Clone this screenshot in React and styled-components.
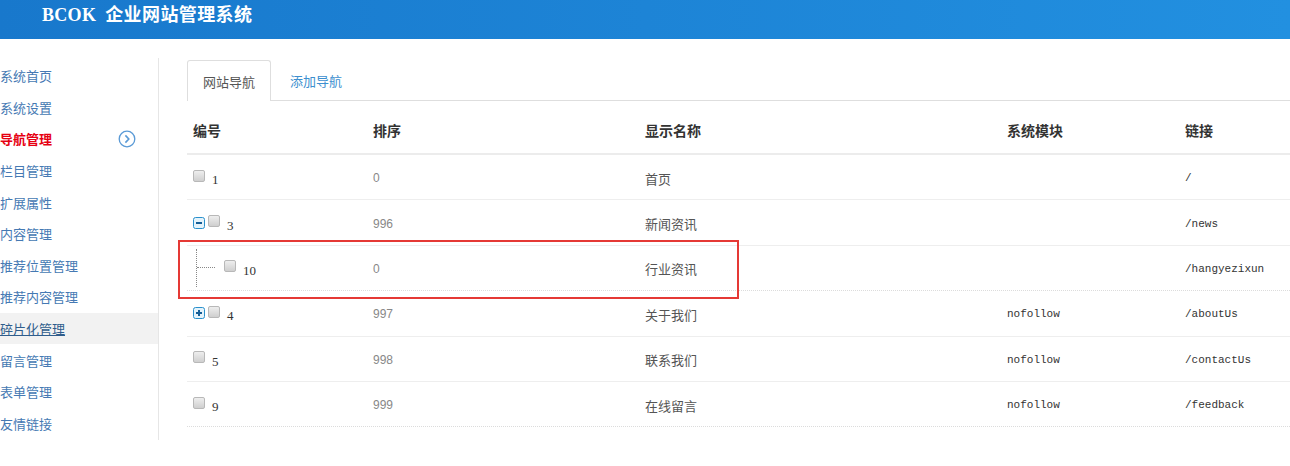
import styled, { createGlobalStyle } from "styled-components";

const GlobalStyle = createGlobalStyle`
  html, body {
    margin: 0;
    padding: 0;
    background: #fff;
    font-family: "Liberation Sans", "Noto Sans CJK SC", sans-serif;
  }
`;

const menu = [
  { label: "系统首页" },
  { label: "系统设置" },
  { label: "导航管理", active: true },
  { label: "栏目管理" },
  { label: "扩展属性" },
  { label: "内容管理" },
  { label: "推荐位置管理" },
  { label: "推荐内容管理" },
  { label: "碎片化管理", hover: true },
  { label: "留言管理" },
  { label: "表单管理" },
  { label: "友情链接" },
];

const rows = [
  { id: "1", sort: "0", name: "首页", module: "", link: "/" },
  { id: "3", sort: "996", name: "新闻资讯", module: "", link: "/news", toggle: "minus" },
  { id: "10", sort: "0", name: "行业资讯", module: "", link: "/hangyezixun", child: true, marked: true },
  { id: "4", sort: "997", name: "关于我们", module: "nofollow", link: "/aboutUs", toggle: "plus" },
  { id: "5", sort: "998", name: "联系我们", module: "nofollow", link: "/contactUs" },
  { id: "9", sort: "999", name: "在线留言", module: "nofollow", link: "/feedback", last: true },
];

function CircleArrow() {
  return (
    <svg width="18" height="18" viewBox="0 0 18 18">
      <circle cx="9" cy="9" r="7.8" fill="none" stroke="#5a9ad6" strokeWidth="1.3" />
      <path d="M7.4 5.4 L10.8 9 L7.4 12.6" fill="none" stroke="#5a9ad6" strokeWidth="1.6" />
    </svg>
  );
}

function ToggleIcon({ type }) {
  return (
    <svg width="12" height="12" viewBox="0 0 12 12">
      <rect x="0.5" y="0.5" width="11" height="11" rx="2" fill="#e4f3fb" stroke="#2a90cc" />
      <rect x="3" y="5" width="6" height="2" fill="#155e96" />
      {type === "plus" && <rect x="5" y="3" width="2" height="6" fill="#155e96" />}
    </svg>
  );
}

export default function App() {
  return (
    <>
      <GlobalStyle />
      <Header>
        <Brand>
          BCOK<BrandCn>企业网站管理系统</BrandCn>
        </Brand>
      </Header>
      <Body>
        <Sidebar>
          {menu.map((m) => (
            <MenuItem key={m.label} $active={m.active} $hover={m.hover}>
              <span>{m.label}</span>
              {m.active && <CircleArrow />}
            </MenuItem>
          ))}
        </Sidebar>
        <Main>
          <Tabs>
            <Tab $active>网站导航</Tab>
            <Tab>添加导航</Tab>
          </Tabs>
          <Table>
            <HeadRow>
              <HeadCell>编号</HeadCell>
              <HeadCell>排序</HeadCell>
              <HeadCell>显示名称</HeadCell>
              <HeadCell>系统模块</HeadCell>
              <HeadCell>链接</HeadCell>
            </HeadRow>
            {rows.map((r) => (
              <Row key={r.id} $dotted={r.child || r.last}>
                <IdCell>
                  {r.child && (
                    <Tree>
                      <TreeH />
                    </Tree>
                  )}
                  {r.toggle && <ToggleIcon type={r.toggle} />}
                  <Check />
                  <IdText>{r.id}</IdText>
                </IdCell>
                <SortCell>{r.sort}</SortCell>
                <NameCell>{r.name}</NameCell>
                <MonoCell>{r.module}</MonoCell>
                <MonoCell>{r.link}</MonoCell>
                {r.marked && <Mark />}
              </Row>
            ))}
          </Table>
        </Main>
      </Body>
    </>
  );
}

const Header = styled.div`
  height: 39px;
  background: linear-gradient(to right, #1878cc, #2290e0);
  padding: 4px 0 0 42px;
  box-sizing: border-box;
`;

const Brand = styled.div`
  color: #fff;
  font-family: "Liberation Serif", "Noto Sans CJK SC", serif;
  font-weight: bold;
  font-size: 18px;
  line-height: 22px;
  letter-spacing: 0.3px;
`;

const BrandCn = styled.span`
  margin-left: 9px;
  letter-spacing: 0.4px;
`;

const Body = styled.div`
  display: flex;
  align-items: flex-start;
  padding-top: 19px;
`;

const Sidebar = styled.div`
  width: 158px;
  flex-shrink: 0;
  border-right: 1px solid #e6e6e6;
  padding: 2px 0 1px;
`;

const MenuItem = styled.div`
  height: 31.6px;
  display: flex;
  align-items: center;
  justify-content: space-between;
  padding-right: 22px;
  font-size: 13px;
  color: ${({ $active, $hover }) => ($active ? "#e60012" : $hover ? "#2f5d8c" : "#4579b3")};
  font-weight: ${({ $active }) => ($active ? "bold" : "normal")};
  text-decoration: ${({ $hover }) => ($hover ? "underline" : "none")};
  background: ${({ $hover }) => ($hover ? "#f2f2f2" : "transparent")};
`;

const Main = styled.div`
  flex: 1;
  padding-left: 28px;
  padding-top: 2px;
  min-width: 0;
`;

const Tabs = styled.div`
  display: flex;
  gap: 3px;
  border-bottom: 1px solid #dedede;
  height: 40px;
`;

const Tab = styled.div`
  box-sizing: border-box;
  padding: 0 15px;
  display: flex;
  align-items: center;
  font-size: 13px;
  color: ${({ $active }) => ($active ? "#555" : "#3d8fcf")};
  border: 1px solid ${({ $active }) => ($active ? "#dedede" : "transparent")};
  border-bottom: none;
  border-radius: 3px 3px 0 0;
  background: #fff;
  margin-bottom: ${({ $active }) => ($active ? "-1px" : "0")};
  height: ${({ $active }) => ($active ? "41px" : "40px")};
`;

const Table = styled.div`
  display: flex;
  flex-direction: column;
`;

const grid = `
  display: grid;
  grid-template-columns: 180px 272px 362px 178px 1fr;
`;

const HeadRow = styled.div`
  ${grid}
  border-bottom: 2px solid #ececec;
  padding: 20px 0 12px;
`;

const HeadCell = styled.div`
  padding: 0 6px;
  font-size: 14px;
  line-height: 20px;
  font-weight: bold;
  color: #333;
`;

const Row = styled.div`
  ${grid}
  position: relative;
  height: 44.4px;
  align-items: center;
  border-bottom: 1px ${({ $dotted }) => ($dotted ? "dotted #dcdcdc" : "solid #eeeeee")};
`;

const Cell = styled.div`
  padding: 0 6px;
  font-size: 12px;
  color: #666;
  white-space: nowrap;
  padding-top: 2px;
`;

const IdCell = styled(Cell)`
  display: flex;
  align-items: center;
  gap: 3px;
  padding-top: 0;
`;

const Tree = styled.span`
  width: 24px;
  height: 38px;
  border-left: 1px dotted #888;
  margin-left: 3px;
  margin-right: 1px;
  display: flex;
  align-items: center;
  box-sizing: border-box;
`;

const TreeH = styled.span`
  width: 18px;
  border-top: 1px dotted #888;
`;

const Check = styled.span`
  width: 12px;
  height: 12px;
  box-sizing: border-box;
  border: 1px solid #b8b8b8;
  border-radius: 2px;
  background: linear-gradient(#eeeeee, #cfcfcf);
  margin-top: -3px;
`;

const IdText = styled.span`
  font-family: "Liberation Serif", serif;
  font-size: 13px;
  color: #333;
  margin-left: 4px;
  margin-top: 6px;
`;

const SortCell = styled(Cell)`
  color: #888;
  font-size: 12px;
`;

const NameCell = styled(Cell)`
  font-size: 13px;
  color: #555;
`;

const MonoCell = styled(Cell)`
  font-family: "Liberation Mono", monospace;
  font-size: 11px;
  color: #333;
`;

const Mark = styled.div`
  position: absolute;
  left: -9px;
  top: -6px;
  width: 561px;
  height: 59px;
  box-sizing: border-box;
  border: 2px solid #e53935;
  pointer-events: none;
`;
